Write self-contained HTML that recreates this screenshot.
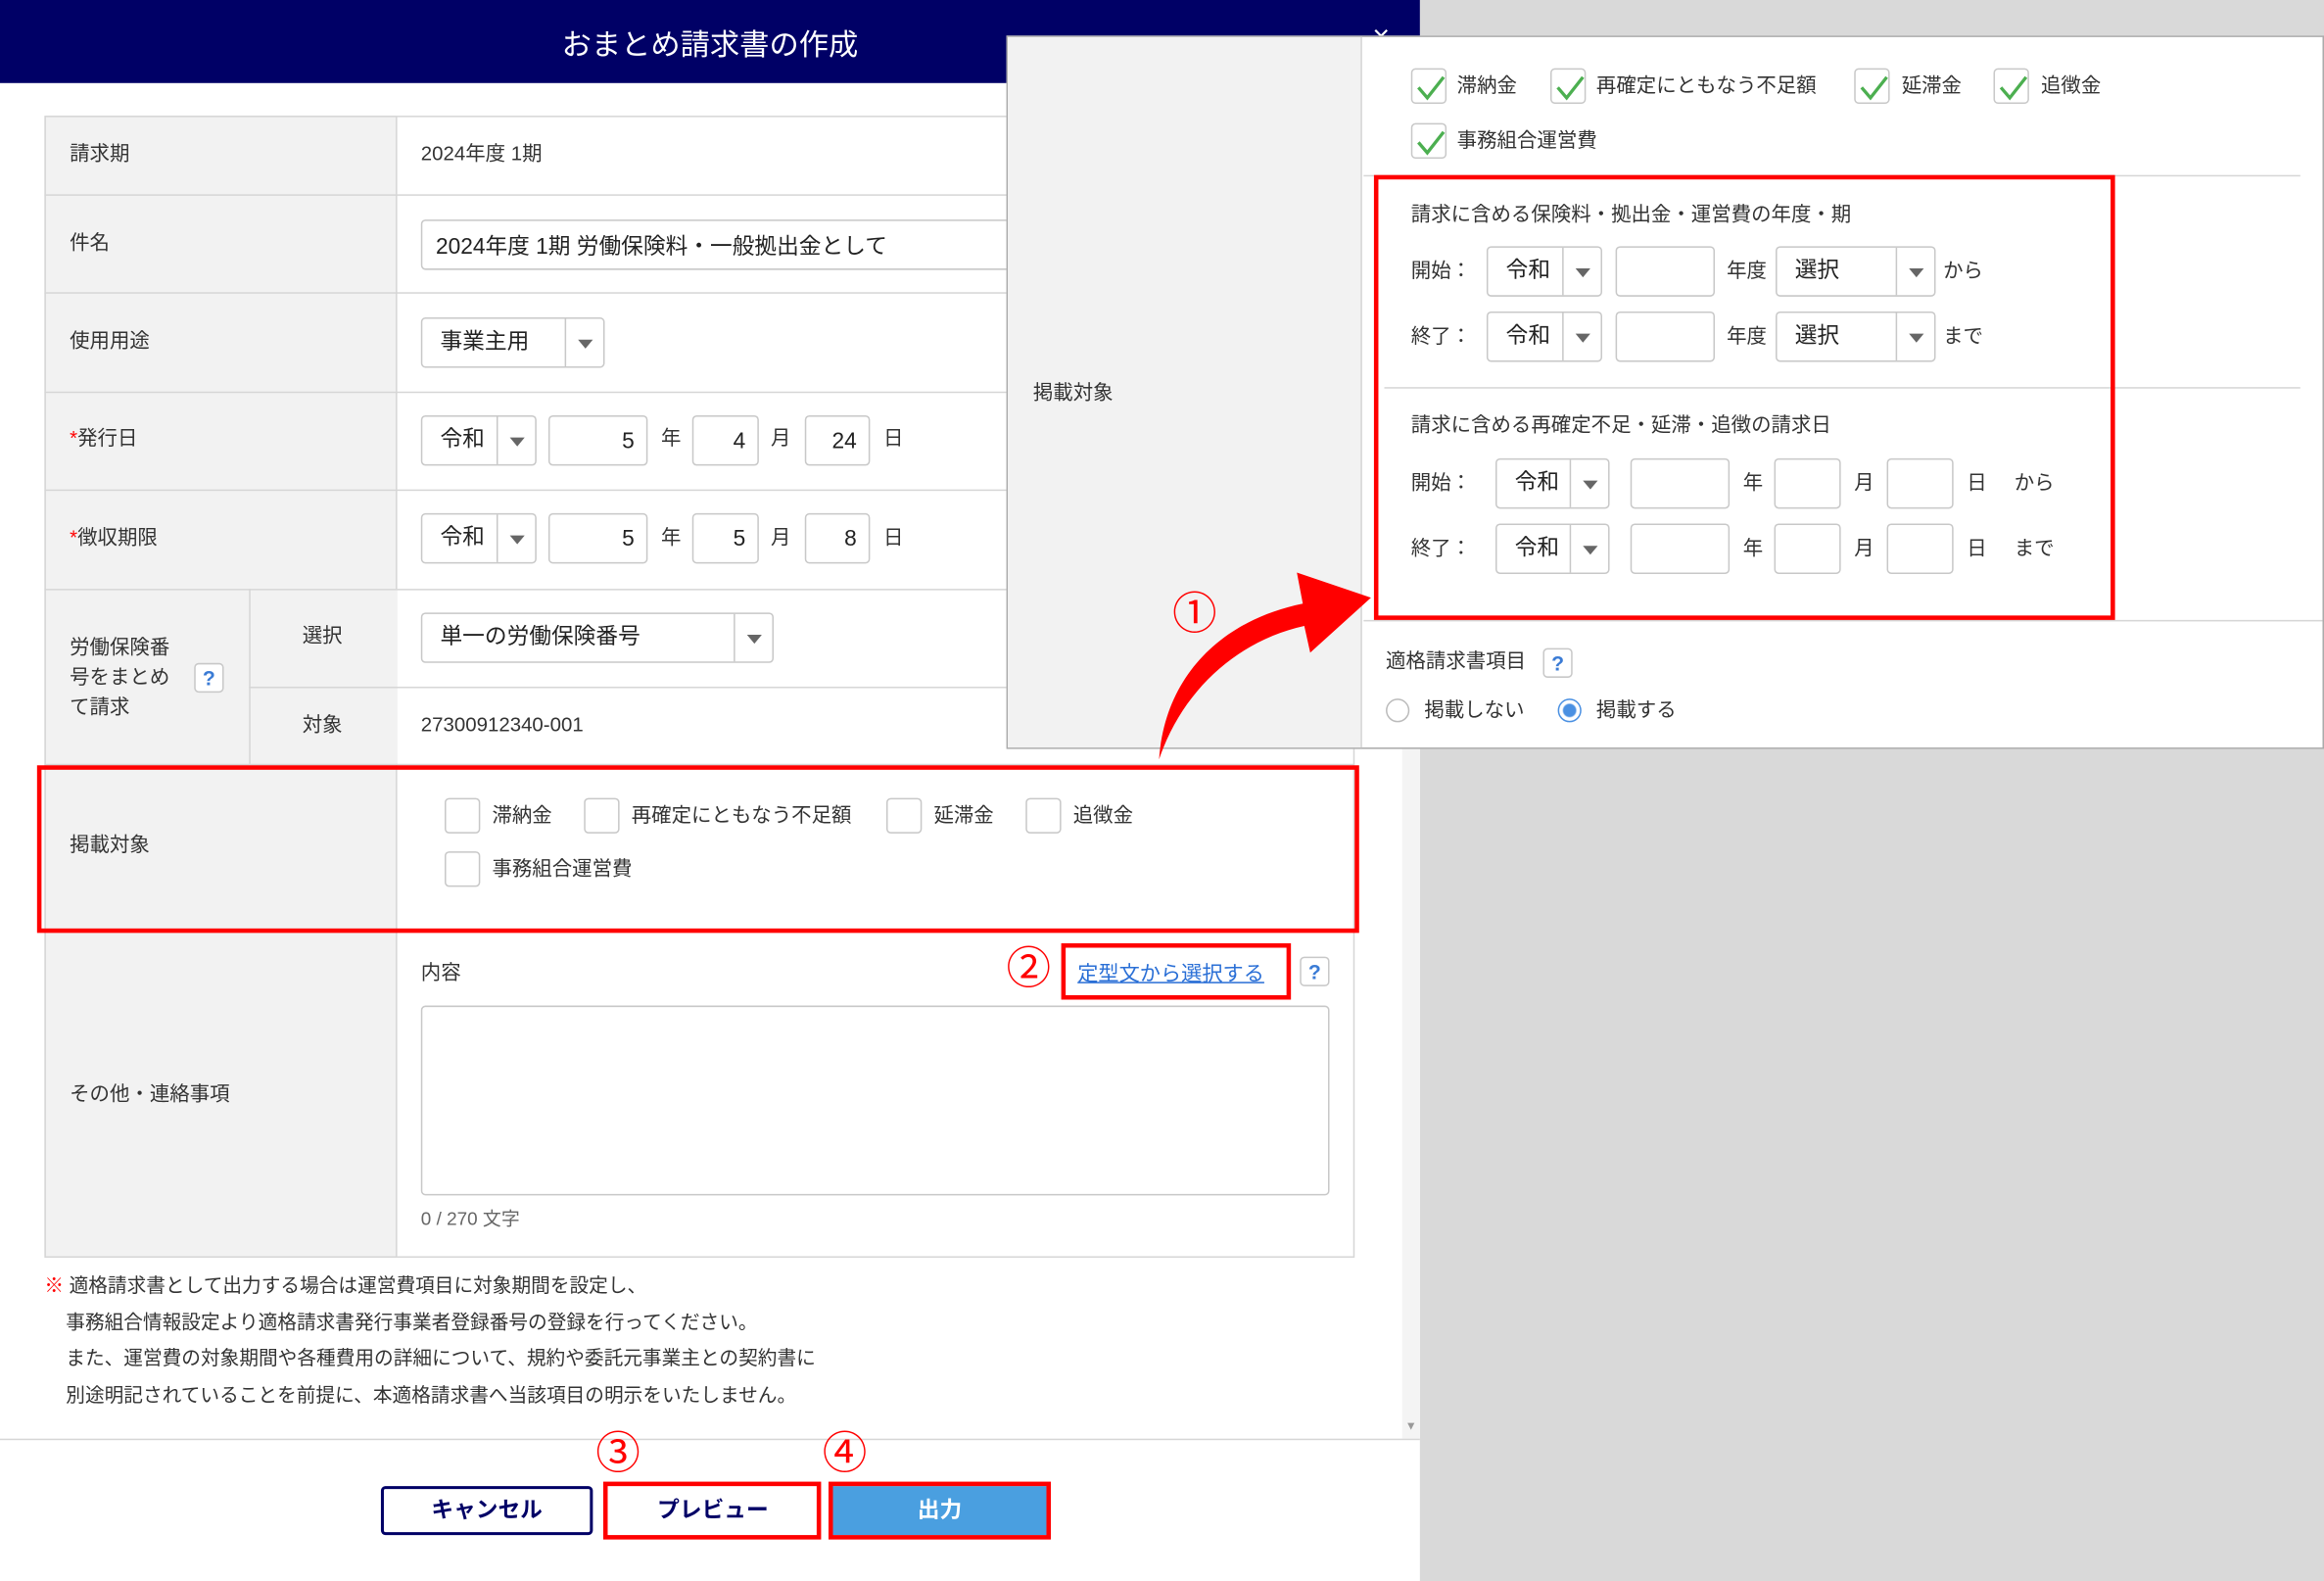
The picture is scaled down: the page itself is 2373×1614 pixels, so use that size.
<!DOCTYPE html>
<html><head><meta charset="utf-8"><style>
*{box-sizing:border-box;margin:0;padding:0}
html,body{width:2373px;height:1614px;overflow:hidden;background:#d9d9d9}
body{font-family:"Liberation Sans","Noto Sans CJK JP",sans-serif;color:#333}
#w{position:absolute;left:0;top:0;width:1568px;height:1066px;transform:scale(1.5134,1.5141);transform-origin:0 0}
.a{position:absolute}
.lab{position:absolute;font-size:13.5px;color:#333;line-height:16px}
.box{position:absolute;border:1px solid #c8c8c8;border-radius:3px;background:#fff;font-size:15px;color:#222}
.sel{position:absolute;border:1px solid #c8c8c8;border-radius:3px;background:#fff;font-size:15px;color:#222;line-height:18px}
.sel span{position:absolute;left:12px;top:50%;transform:translateY(-50%)}
.sel i{position:absolute;right:0;top:0;bottom:0;width:26px;border-left:1px solid #c8c8c8}
.sel i:after{content:"";position:absolute;left:8px;top:50%;margin-top:-2px;border-left:5px solid transparent;border-right:5px solid transparent;border-top:6px solid #666}
.num{position:absolute;text-align:right;padding-right:8px;font-size:15px}
.cb{position:absolute;width:24px;height:24px;border:1px solid #c8c8c8;border-radius:3px;background:#fff}
.red{position:absolute;border:3px solid #f00}
.hl{position:absolute;height:1px;background:#d6d6d6}
.q{position:absolute;width:20px;height:20px;border:1px solid #c8c8c8;border-radius:3px;color:#3a7bd5;font-size:14px;font-weight:bold;text-align:center;line-height:18px;background:#fff}
.circ{position:absolute;color:#f00;font-size:30px;line-height:30px}
</style></head><body><div id="w">
<div class="a" style="left:0;top:0;width:958px;height:1066px;background:#fff"></div>
<div class="a" style="left:0;top:0;width:958px;height:56px;background:#000066"></div>
<div class="a" style="left:0;top:14px;width:958px;text-align:center;color:#fff;font-size:20px">おまとめ請求書の作成</div>
<div class="a" style="left:926px;top:14px;color:#fff;font-size:20px">×</div>

<div class="a" style="left:30px;top:78px;width:884px;height:770px;border:1px solid #d6d6d6"></div>
<div class="a" style="left:30px;top:78px;width:238px;height:770px;background:#f2f2f2;border:1px solid #d6d6d6"></div>
<div class="a" style="left:168px;top:397px;width:100px;height:118px;background:#f2f2f2;border-left:1px solid #d6d6d6"></div>
<div class="hl" style="left:30px;top:131px;width:884px"></div>
<div class="hl" style="left:30px;top:197px;width:884px"></div>
<div class="hl" style="left:30px;top:264px;width:884px"></div>
<div class="hl" style="left:30px;top:330px;width:884px"></div>
<div class="hl" style="left:30px;top:397px;width:884px"></div>
<div class="hl" style="left:168px;top:463px;width:746px"></div>
<div class="hl" style="left:30px;top:515px;width:884px"></div>
<div class="hl" style="left:30px;top:627px;width:884px"></div>

<div class="lab" style="left:47px;top:96px">請求期</div>
<div class="lab" style="left:284px;top:96px">2024年度 1期</div>
<div class="lab" style="left:47px;top:156px">件名</div>
<div class="box" style="left:284px;top:148px;width:420px;height:34px;padding:6px 9px">2024年度 1期 労働保険料・一般拠出金として</div>
<div class="lab" style="left:47px;top:222px">使用用途</div>
<div class="sel" style="left:284px;top:214px;width:124px;height:34px"><span>事業主用</span><i></i></div>
<div class="lab" style="left:47px;top:288px"><span style="color:#f00">*</span>発行日</div>
<div class="sel" style="left:284px;top:280px;width:78px;height:34px"><span>令和</span><i></i></div>
<div class="box num" style="left:370px;top:280px;width:67px;height:34px;line-height:34px">5</div>
<div class="lab" style="left:446px;top:288px">年</div>
<div class="box num" style="left:467px;top:280px;width:45px;height:34px;line-height:34px">4</div>
<div class="lab" style="left:520px;top:288px">月</div>
<div class="box num" style="left:543px;top:280px;width:44px;height:34px;line-height:34px">24</div>
<div class="lab" style="left:596px;top:288px">日</div>
<div class="lab" style="left:47px;top:355px"><span style="color:#f00">*</span>徴収期限</div>
<div class="sel" style="left:284px;top:346px;width:78px;height:34px"><span>令和</span><i></i></div>
<div class="box num" style="left:370px;top:346px;width:67px;height:34px;line-height:34px">5</div>
<div class="lab" style="left:446px;top:355px">年</div>
<div class="box num" style="left:467px;top:346px;width:45px;height:34px;line-height:34px">5</div>
<div class="lab" style="left:520px;top:355px">月</div>
<div class="box num" style="left:543px;top:346px;width:44px;height:34px;line-height:34px">8</div>
<div class="lab" style="left:596px;top:355px">日</div>
<div class="lab" style="left:47px;top:427px;line-height:20px">労働保険番<br>号をまとめ<br>て請求</div>
<div class="q" style="left:131px;top:447px">?</div>
<div class="lab" style="left:204px;top:421px">選択</div>
<div class="sel" style="left:284px;top:413px;width:238px;height:34px"><span>単一の労働保険番号</span><i></i></div>
<div class="lab" style="left:204px;top:481px">対象</div>
<div class="lab" style="left:284px;top:481px">27300912340-001</div>

<div class="lab" style="left:47px;top:562px">掲載対象</div>
<div class="cb" style="left:300px;top:538px"></div><div class="lab" style="left:332px;top:542px">滞納金</div>
<div class="cb" style="left:394px;top:538px"></div><div class="lab" style="left:426px;top:542px">再確定にともなう不足額</div>
<div class="cb" style="left:598px;top:538px"></div><div class="lab" style="left:630px;top:542px">延滞金</div>
<div class="cb" style="left:692px;top:538px"></div><div class="lab" style="left:724px;top:542px">追徴金</div>
<div class="cb" style="left:300px;top:574px"></div><div class="lab" style="left:332px;top:578px">事務組合運営費</div>
<div class="red" style="left:25px;top:516px;width:892px;height:113px"></div>

<div class="lab" style="left:47px;top:730px">その他・連絡事項</div>
<div class="lab" style="left:284px;top:648px">内容</div>
<div class="a" style="left:727px;top:646px;font-size:14px;color:#2a6fd6;text-decoration:underline">定型文から選択する</div>
<div class="red" style="left:716px;top:636px;width:155px;height:38px"></div>
<div class="q" style="left:877px;top:645px">?</div>
<div class="box" style="left:284px;top:678px;width:613px;height:128px"></div>
<div class="lab" style="left:284px;top:814px;font-size:12.5px;color:#666">0 / 270 文字</div>

<div class="a" style="left:30px;top:855px;font-size:13px;line-height:24.5px;color:#333"><span style="color:#f00">※</span> 適格請求書として出力する場合は運営費項目に対象期間を設定し、<br>&nbsp;&nbsp;&nbsp;&nbsp;事務組合情報設定より適格請求書発行事業者登録番号の登録を行ってください。<br>&nbsp;&nbsp;&nbsp;&nbsp;また、運営費の対象期間や各種費用の詳細について、規約や委託元事業主との契約書に<br>&nbsp;&nbsp;&nbsp;&nbsp;別途明記されていることを前提に、本適格請求書へ当該項目の明示をいたしません。</div>
<div class="a" style="left:946px;top:56px;width:12px;height:914px;background:#f4f4f4"></div>
<div class="a" style="left:948px;top:957px;font-size:8px;color:#999">▼</div>
<div class="hl" style="left:0;top:970px;width:958px"></div>

<div class="a" style="left:257px;top:1002px;width:143px;height:33px;border:2px solid #000066;border-radius:3px;color:#000066;font-weight:bold;font-size:15px;text-align:center;line-height:29px">キャンセル</div>
<div class="a" style="left:410px;top:1002px;width:142px;height:33px;color:#000066;font-weight:bold;font-size:15px;text-align:center;line-height:33px">プレビュー</div>
<div class="red" style="left:407px;top:999px;width:147px;height:39px"></div>
<div class="a" style="left:562px;top:1002px;width:144px;height:33px;background:#4a9fe0;color:#fff;font-weight:bold;font-size:15px;text-align:center;line-height:33px">出力</div>
<div class="red" style="left:559px;top:999px;width:150px;height:39px"></div>
<div class="circ" style="left:402px;top:966px">③</div>
<div class="circ" style="left:555px;top:966px">④</div>
<div class="circ" style="left:679px;top:639px">②</div>

<div class="a" style="left:679px;top:24px;width:889px;height:481px;background:#fff;border:1px solid #aaa"></div>
<div class="a" style="left:680px;top:25px;width:239px;height:479px;background:#f2f2f2;border-right:1px solid #d6d6d6"></div>
<div class="lab" style="left:697px;top:257px">掲載対象</div>
<div class="hl" style="left:920px;top:118px;width:632px"></div>
<div class="hl" style="left:934px;top:261px;width:618px"></div>
<div class="hl" style="left:920px;top:418px;width:647px"></div>
<svg class="a" style="left:0;top:0" width="1568" height="1066">
<g fill="none" stroke="#4caf50" stroke-width="2.2">
<path d="M957,59 l6,7 l11,-14"/><path d="M1051,59 l6,7 l11,-14"/><path d="M1256,59 l6,7 l11,-14"/><path d="M1350,59 l6,7 l11,-14"/><path d="M957,96 l6,7 l11,-14"/>
</g>
<path fill="#f00" d="M782,512 C786,455 825,418 879,407 L875,386 L925,403 L884,440 L880,422 C835,432 798,465 782,512 Z"/>
</svg>
<div class="circ" style="left:791px;top:400px">①</div>
<div class="cb" style="left:952px;top:46px;background:none"></div><div class="lab" style="left:983px;top:50px">滞納金</div>
<div class="cb" style="left:1046px;top:46px;background:none"></div><div class="lab" style="left:1077px;top:50px">再確定にともなう不足額</div>
<div class="cb" style="left:1251px;top:46px;background:none"></div><div class="lab" style="left:1283px;top:50px">延滞金</div>
<div class="cb" style="left:1345px;top:46px;background:none"></div><div class="lab" style="left:1377px;top:50px">追徴金</div>
<div class="cb" style="left:952px;top:83px;background:none"></div><div class="lab" style="left:983px;top:87px">事務組合運営費</div>

<div class="lab" style="left:952px;top:137px">請求に含める保険料・拠出金・運営費の年度・期</div>
<div class="lab" style="left:952px;top:175px">開始：</div>
<div class="sel" style="left:1003px;top:166px;width:78px;height:34px"><span>令和</span><i></i></div>
<div class="box" style="left:1090px;top:166px;width:67px;height:34px"></div>
<div class="lab" style="left:1165px;top:175px">年度</div>
<div class="sel" style="left:1198px;top:166px;width:108px;height:34px"><span>選択</span><i></i></div>
<div class="lab" style="left:1311px;top:175px">から</div>
<div class="lab" style="left:952px;top:219px">終了：</div>
<div class="sel" style="left:1003px;top:210px;width:78px;height:34px"><span>令和</span><i></i></div>
<div class="box" style="left:1090px;top:210px;width:67px;height:34px"></div>
<div class="lab" style="left:1165px;top:219px">年度</div>
<div class="sel" style="left:1198px;top:210px;width:108px;height:34px"><span>選択</span><i></i></div>
<div class="lab" style="left:1311px;top:219px">まで</div>

<div class="lab" style="left:952px;top:279px">請求に含める再確定不足・延滞・追徴の請求日</div>
<div class="lab" style="left:952px;top:318px">開始：</div>
<div class="sel" style="left:1009px;top:309px;width:77px;height:34px"><span>令和</span><i></i></div>
<div class="box" style="left:1100px;top:309px;width:67px;height:34px"></div>
<div class="lab" style="left:1176px;top:318px">年</div>
<div class="box" style="left:1197px;top:309px;width:45px;height:34px"></div>
<div class="lab" style="left:1251px;top:318px">月</div>
<div class="box" style="left:1273px;top:309px;width:45px;height:34px"></div>
<div class="lab" style="left:1327px;top:318px">日</div>
<div class="lab" style="left:1359px;top:318px">から</div>
<div class="lab" style="left:952px;top:362px">終了：</div>
<div class="sel" style="left:1009px;top:353px;width:77px;height:34px"><span>令和</span><i></i></div>
<div class="box" style="left:1100px;top:353px;width:67px;height:34px"></div>
<div class="lab" style="left:1176px;top:362px">年</div>
<div class="box" style="left:1197px;top:353px;width:45px;height:34px"></div>
<div class="lab" style="left:1251px;top:362px">月</div>
<div class="box" style="left:1273px;top:353px;width:45px;height:34px"></div>
<div class="lab" style="left:1327px;top:362px">日</div>
<div class="lab" style="left:1359px;top:362px">まで</div>
<div class="red" style="left:927px;top:118px;width:500px;height:300px"></div>

<div class="lab" style="left:935px;top:438px">適格請求書項目</div>
<div class="q" style="left:1041px;top:437px">?</div>
<div class="a" style="left:935px;top:471px;width:16px;height:16px;border:1px solid #bbb;border-radius:50%"></div>
<div class="lab" style="left:961px;top:471px">掲載しない</div>
<div class="a" style="left:1051px;top:471px;width:16px;height:16px;border:1px solid #4a90e2;border-radius:50%;background:radial-gradient(#4a90e2 0 4px,#fff 5px)"></div>
<div class="lab" style="left:1077px;top:471px">掲載する</div>
</div></body></html>
